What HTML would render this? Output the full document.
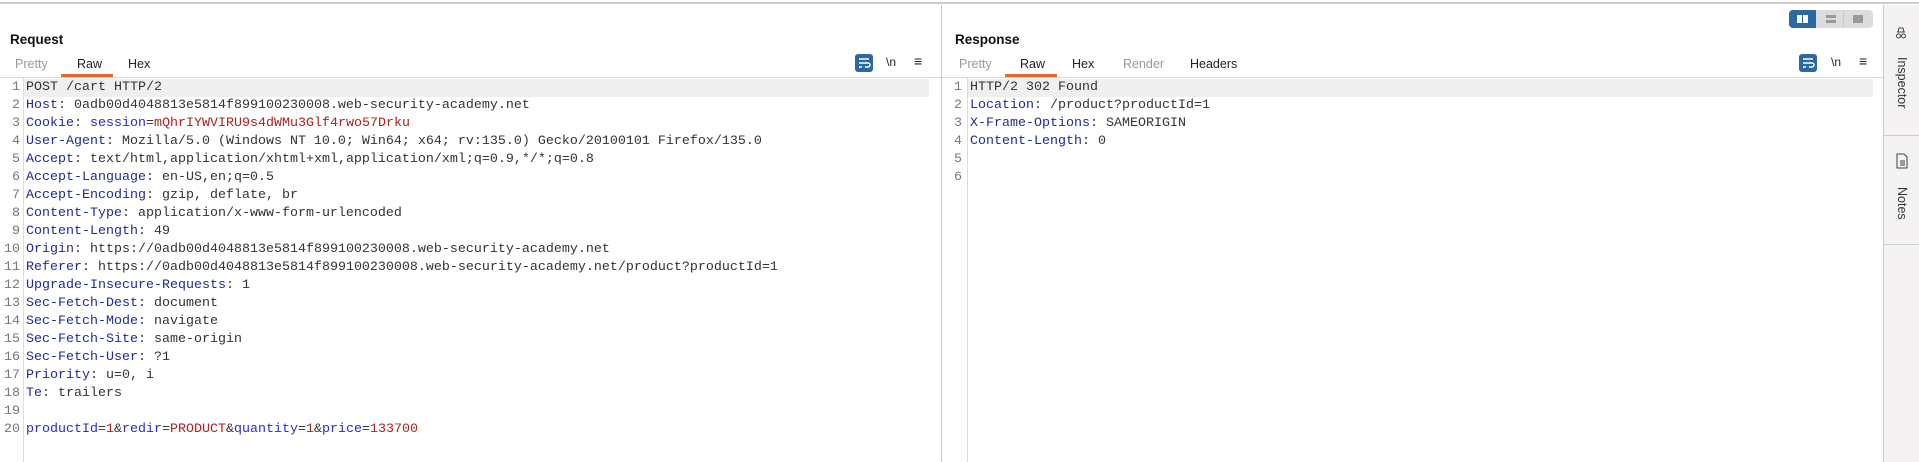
<!DOCTYPE html>
<html><head><meta charset="utf-8"><style>
*{margin:0;padding:0;box-sizing:border-box}
body{width:1919px;height:462px;background:#fff;position:relative;overflow:hidden;font-family:"Liberation Sans",sans-serif}
.topline{position:absolute;left:0;top:2px;width:1919px;height:2px;background:#cfcacb}
.title{position:absolute;top:32px;font-weight:bold;font-size:13.5px;color:#111}
.tab{position:absolute;top:57px;font-size:12.5px;color:#222}
.tab.g{color:#999}
.ul{position:absolute;top:74px;height:3px;background:#e8632d}
.sep{position:absolute;top:77px;height:1px;background:#d6d6d6}
.code{position:absolute;top:79px;font-family:"Liberation Mono",monospace;font-size:13.33px;line-height:18px;color:#333}
.ln{position:absolute;top:79px;font-family:"Liberation Mono",monospace;font-size:13.33px;line-height:18px;color:#777;text-align:right}
.gut{position:absolute;top:78px;width:1px;height:384px;background:#ddd}
.hl{position:absolute;top:79px;height:18px;background:#efefef}
.k{color:#1e2a9b}.r{color:#b0201e}
.wrap{position:absolute;top:54px;width:18px;height:18px;background:#2b68a4;border-radius:3px}
.nl{position:absolute;top:55px;font-size:12px;color:#222}
.menu{position:absolute;top:53px;font-size:14px;color:#222}
.vdiv{position:absolute;left:941px;top:5px;width:1px;height:457px;background:#c8c8c8}
.side{position:absolute;left:1883px;top:5px;width:36px;height:457px;background:#f4f2f2;border-left:1px solid #ccc}
.vt{position:absolute;font-size:12.5px;color:#333;transform:rotate(90deg);transform-origin:left top;white-space:nowrap}
</style></head><body>
<div class="topline"></div>
<div class="vdiv"></div>

<div class="title" style="left:10px">Request</div>
<div class="tab g" style="left:15px">Pretty</div>
<div class="tab" style="left:77px">Raw</div>
<div class="tab" style="left:128px">Hex</div>
<div class="ul" style="left:61px;width:52px"></div>
<div class="sep" style="left:0;width:941px"></div>
<div class="wrap" style="left:855px"><svg width="18" height="18"><path d="M4 5h10M4 9h9a2 2 0 0 1 0 4h-3M4 13h3" stroke="#fff" stroke-width="1.4" fill="none"/></svg></div>
<div class="nl" style="left:886px">\n</div>
<div class="menu" style="left:914px">≡</div>
<div class="hl" style="left:24px;width:905px"></div>
<div class="gut" style="left:23px"></div>
<div class="ln" style="left:0;width:20px">1<br>2<br>3<br>4<br>5<br>6<br>7<br>8<br>9<br>10<br>11<br>12<br>13<br>14<br>15<br>16<br>17<br>18<br>19<br>20</div>
<div class="code" style="left:26px">POST /cart HTTP/2<br>
<span class="k">Host</span>: 0adb00d4048813e5814f899100230008.web-security-academy.net<br>
<span class="k">Cookie</span>: <span class="k" style="color:#2a2ad0">session</span>=<span class="r">mQhrIYWVIRU9s4dWMu3Glf4rwo57Drku</span><br>
<span class="k">User-Agent</span>: Mozilla/5.0 (Windows NT 10.0; Win64; x64; rv:135.0) Gecko/20100101 Firefox/135.0<br>
<span class="k">Accept</span>: text/html,application/xhtml+xml,application/xml;q=0.9,*/*;q=0.8<br>
<span class="k">Accept-Language</span>: en-US,en;q=0.5<br>
<span class="k">Accept-Encoding</span>: gzip, deflate, br<br>
<span class="k">Content-Type</span>: application/x-www-form-urlencoded<br>
<span class="k">Content-Length</span>: 49<br>
<span class="k">Origin</span>: https://0adb00d4048813e5814f899100230008.web-security-academy.net<br>
<span class="k">Referer</span>: https://0adb00d4048813e5814f899100230008.web-security-academy.net/product?productId=1<br>
<span class="k">Upgrade-Insecure-Requests</span>: 1<br>
<span class="k">Sec-Fetch-Dest</span>: document<br>
<span class="k">Sec-Fetch-Mode</span>: navigate<br>
<span class="k">Sec-Fetch-Site</span>: same-origin<br>
<span class="k">Sec-Fetch-User</span>: ?1<br>
<span class="k">Priority</span>: u=0, i<br>
<span class="k">Te</span>: trailers<br>
&nbsp;<br>
<span class="k" style="color:#2a2ad0">productId</span>=<span class="r">1</span>&amp;<span class="k" style="color:#2a2ad0">redir</span>=<span class="r">PRODUCT</span>&amp;<span class="k" style="color:#2a2ad0">quantity</span>=<span class="r">1</span>&amp;<span class="k" style="color:#2a2ad0">price</span>=<span class="r">133700</span></div>

<div class="title" style="left:955px">Response</div>
<div class="tab g" style="left:959px">Pretty</div>
<div class="tab" style="left:1020px">Raw</div>
<div class="tab" style="left:1072px">Hex</div>
<div class="tab g" style="left:1123px">Render</div>
<div class="tab" style="left:1190px">Headers</div>
<div class="ul" style="left:1005px;width:52px"></div>
<div class="sep" style="left:942px;width:941px"></div>
<div style="position:absolute;left:1789px;top:10px;width:84px;height:18px;background:#dcdcdc;border-radius:4px;overflow:hidden">
<div style="position:absolute;left:0;top:0;width:27px;height:18px;background:#2b68a4"></div>
<div style="position:absolute;left:8px;top:5px;width:5px;height:8px;background:#fff"></div><div style="position:absolute;left:14px;top:5px;width:5px;height:8px;background:#fff"></div>
<div style="position:absolute;left:37px;top:5px;width:10px;height:3px;background:#999"></div><div style="position:absolute;left:37px;top:10px;width:10px;height:3px;background:#999"></div>
<div style="position:absolute;left:54px;top:0;width:1px;height:18px;background:#c8c8c8"></div>
<div style="position:absolute;left:64px;top:5px;width:10px;height:8px;background:#999"></div></div>
<div class="wrap" style="left:1799px"><svg width="18" height="18"><path d="M4 5h10M4 9h9a2 2 0 0 1 0 4h-3M4 13h3" stroke="#fff" stroke-width="1.4" fill="none"/></svg></div>
<div class="nl" style="left:1831px">\n</div>
<div class="menu" style="left:1859px">≡</div>
<div class="hl" style="left:968px;width:905px"></div>
<div class="gut" style="left:967px"></div>
<div class="ln" style="left:944px;width:18px">1<br>2<br>3<br>4<br>5<br>6</div>
<div class="code" style="left:970px">HTTP/2 302 Found<br>
<span class="k">Location</span>: /product?productId=1<br>
<span class="k">X-Frame-Options</span>: SAMEORIGIN<br>
<span class="k">Content-Length</span>: 0</div>

<div class="side">
<svg style="position:absolute;left:10px;top:21px" width="14" height="14"><path d="M3 6h8M4 6l1-4h4l1 4" stroke="#444" fill="none"/><circle cx="4.5" cy="10" r="2" stroke="#444" fill="none"/><circle cx="9.5" cy="10" r="2" stroke="#444" fill="none"/></svg>
<div class="vt" style="left:25px;top:52px">Inspector</div>
<div style="position:absolute;left:0;top:130px;width:36px;height:1px;background:#ccc"></div>
<svg style="position:absolute;left:11px;top:148px" width="14" height="16"><path d="M2 1h7l3 3v11H2z" stroke="#444" fill="none"/><path d="M5 8h5M5 10h5M5 12h5" stroke="#444"/></svg>
<div class="vt" style="left:25px;top:182px">Notes</div>
<div style="position:absolute;left:0;top:239px;width:36px;height:1px;background:#ccc"></div>
</div>
</body></html>
